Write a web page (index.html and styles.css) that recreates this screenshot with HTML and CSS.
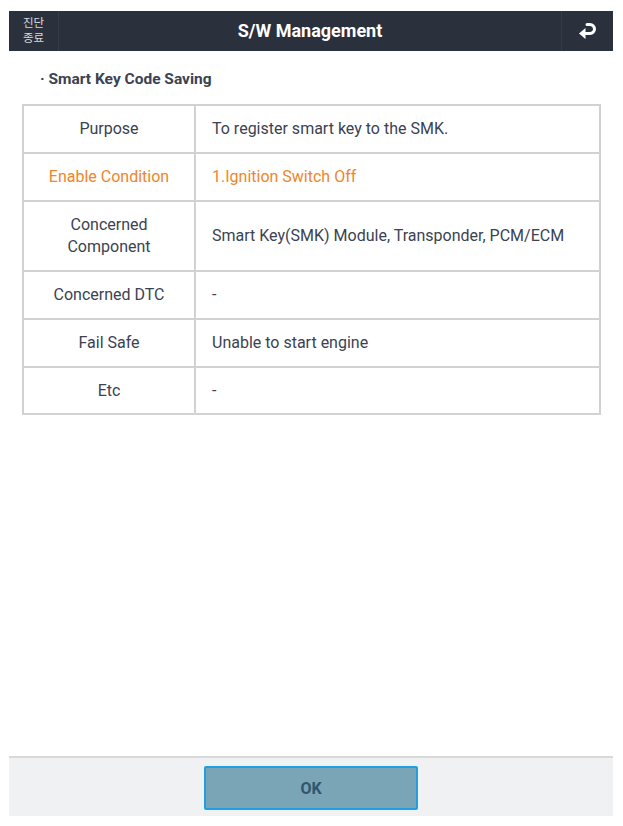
FILE: index.html
```html
<!DOCTYPE html>
<html lang="en">
<head>
<meta charset="utf-8">
<title>S/W Management</title>
<link rel="stylesheet" href="styles.css">
</head>
<body>
<div class="screen">
  <header class="topbar">
    <div class="exit">진단<br>종료</div>
    <div class="title">S/W Management</div>
    <div class="back">
      <svg width="22" height="20" viewBox="0 0 22 20" aria-hidden="true">
        <path d="M7 12.5 H13 A4.5 4.5 0 0 0 17.5 8 A4.5 4.5 0 0 0 13 3.5 H10" fill="none" stroke="#ffffff" stroke-width="3" stroke-linecap="round"/>
        <path d="M2 12.5 L8.5 7 L8.5 18 Z" fill="#ffffff"/>
      </svg>
    </div>
  </header>
  <main class="content">
    <h2 class="subtitle">· Smart Key Code Saving</h2>
    <table class="info">
      <tr class="r48"><th>Purpose</th><td>To register smart key to the SMK.</td></tr>
      <tr class="r48 hl"><th>Enable Condition</th><td>1.Ignition Switch Off</td></tr>
      <tr class="r70"><th>Concerned<br>Component</th><td>Smart Key(SMK) Module, Transponder, PCM/ECM</td></tr>
      <tr class="r48"><th>Concerned DTC</th><td>-</td></tr>
      <tr class="r48"><th>Fail Safe</th><td>Unable to start engine</td></tr>
      <tr class="r47"><th>Etc</th><td>-</td></tr>
    </table>
  </main>
  <footer class="footer">
    <button class="ok">OK</button>
  </footer>
</div>
</body>
</html>
```
FILE: styles.css
```css
html, body {
  margin: 0;
  padding: 0;
  background: #ffffff;
}
body {
  font-family: Roboto, "Noto Sans CJK KR", sans-serif;
  color: #3b4252;
}
.screen {
  margin: 11px 10px 0 9px;
  height: 805px;
  display: flex;
  flex-direction: column;
}
.topbar {
  height: 40px;
  background: #2b313c;
  display: flex;
  align-items: stretch;
  color: #ffffff;
}
.exit {
  width: 50px;
  border-right: 1px solid #353c48;
  font-family: "Noto Sans CJK KR", sans-serif;
  font-size: 11.5px;
  line-height: 15px;
  color: #d6d9de;
  padding: 4px 0 0 14px;
  box-sizing: border-box;
}
.title {
  flex: 1;
  text-align: center;
  font-size: 18px;
  font-weight: 700;
  line-height: 40px;
}
.back {
  width: 51px;
  border-left: 1px solid #353c48;
  display: flex;
  align-items: center;
  justify-content: center;
}
.content {
  flex: 1;
  padding: 0 12px 0 13px;
}
.subtitle {
  margin: 0 0 14px 18px;
  padding-top: 17px;
  font-size: 15.5px;
  font-weight: 700;
  color: #3b4252;
  line-height: 22px;
  height: 22px;
}
.info {
  width: 579px;
  border-collapse: collapse;
  border: 2px solid #c9c9c9;
  font-size: 16px;
}
.info th, .info td {
  border: 2px solid #d2d2d2;
  font-weight: 400;
  line-height: 22px;
}
.info th {
  width: 164px;
  text-align: center;
  color: #3b4252;
  padding: 0 3px;
}
.info td {
  text-align: left;
  padding: 0 8px 0 16px;
  color: #3b4252;
}
.r48 { height: 48px; }
.r47 { height: 47px; }
.r70 { height: 70px; }
.info .hl th, .info .hl td {
  color: #f0852a;
}
.footer {
  height: 50px;
  background: #f0f1f3;
  border-top: 2px solid #d9d9d9;
  display: flex;
  justify-content: center;
  align-items: flex-start;
  padding-top: 8px;
}
.ok {
  width: 214px;
  height: 44px;
  background: #7aa5b6;
  border: 2px solid #1d9fe0;
  border-radius: 2px;
  color: #2f566f;
  font-family: Roboto, sans-serif;
  font-size: 16px;
  font-weight: 700;
}
```
